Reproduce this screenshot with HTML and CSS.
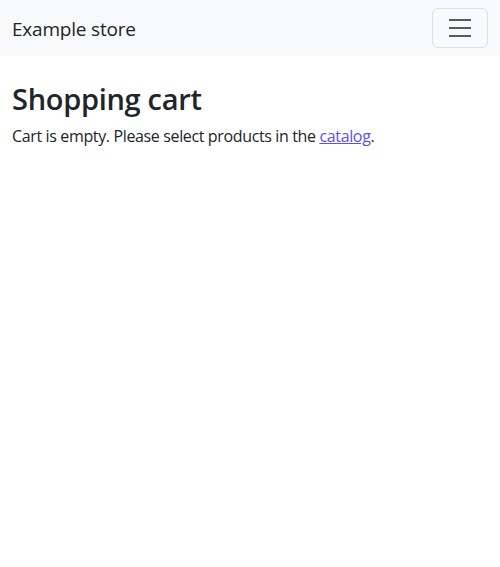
FILE: index.html
```html
<!DOCTYPE html>
<html lang="en">
<head>
<meta charset="utf-8">
<title>Shopping cart</title>
<link rel="stylesheet" href="styles.css">
</head>
<body>
<nav class="navbar">
  <a class="brand" href="#">Example store</a>
  <button class="toggler" type="button" aria-label="Toggle navigation">
    <svg width="30" height="30" viewBox="0 0 30 30"><path d="M4 7h22M4 15h22M4 23h22" stroke="rgba(33,37,41,0.75)" stroke-width="2" stroke-linecap="butt" fill="none"/></svg>
  </button>
</nav>
<main class="container">
  <h1 class="title">Shopping cart</h1>
  <p class="text">Cart is empty. Please select products in the <a class="link" href="#">catalog</a>.</p>
</main>
</body>
</html>
```
FILE: styles.css
```css
* { box-sizing: border-box; }
body {
  margin: 0;
  font-family: "Open Sans", "Noto Sans", sans-serif;
  font-size: 16px;
  line-height: 1.5;
  color: #212529;
  background: #fff;
}
.navbar {
  height: 56px;
  background: #f8f9fa;
  display: flex;
  align-items: center;
  justify-content: space-between;
  padding: 0 12px;
}
.brand {
  font-size: 19px;
  color: #212529;
  text-decoration: none;
  letter-spacing: -0.2px;
  padding-top: 2px;
}
.toggler {
  width: 56px;
  height: 40px;
  border: 1px solid rgba(0,0,0,0.1);
  border-radius: 6px;
  background: transparent;
  display: flex;
  align-items: center;
  justify-content: center;
  padding: 0;
}
.container { padding: 0 12px; }
.title {
  margin: 26px 0 7px;
  font-size: 29px;
  font-weight: 600;
  line-height: 1.2;
  letter-spacing: -0.3px;
}
.text { margin: 0; font-size: 16px; letter-spacing: -0.36px; }
.link { color: #5a4ff2; }
```
